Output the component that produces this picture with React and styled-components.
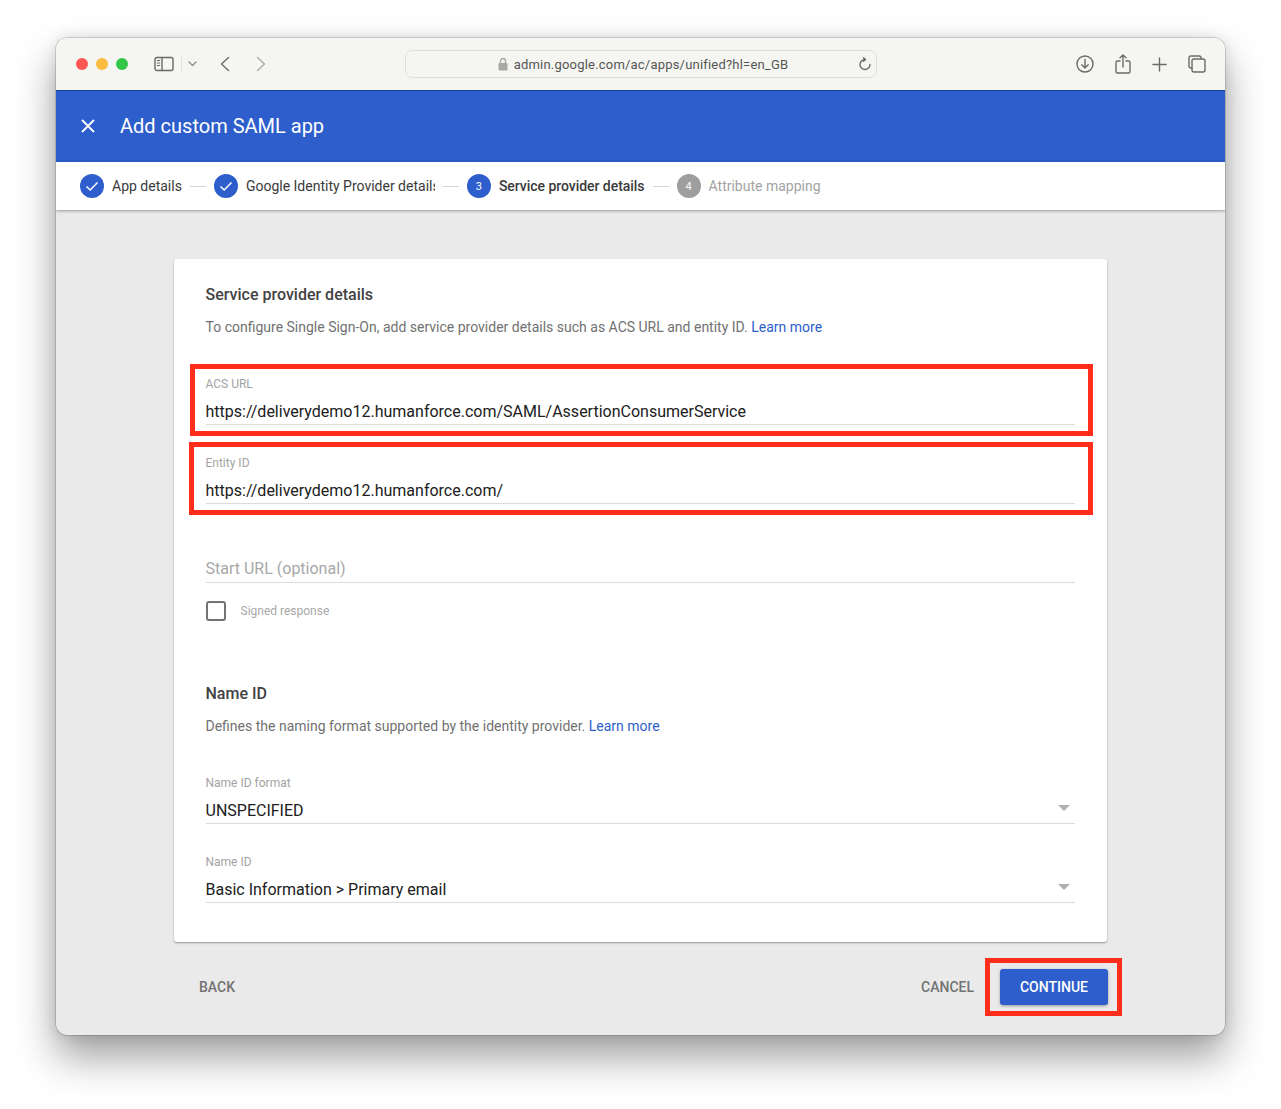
import React from 'react';
import styled, { createGlobalStyle } from 'styled-components';

const GlobalStyle = createGlobalStyle`
  html, body {
    margin: 0;
    padding: 0;
    background: #ffffff;
  }
  body {
    font-family: Roboto, "Liberation Sans", sans-serif;
    -webkit-font-smoothing: antialiased;
  }
`;

const Page = styled.div`
  width: 1281px;
  height: 1109px;
  box-sizing: border-box;
  padding: 38px 56px 0;
  overflow: hidden;
`;

const Window = styled.div`
  width: 1169px;
  height: 997px;
  border-radius: 11px;
  overflow: hidden;
  background: #eaeaea;
  display: flex;
  flex-direction: column;
  box-shadow: 0 0 0 0.5px rgba(0, 0, 0, 0.28), 0 22px 40px rgba(0, 0, 0, 0.38), 0 0 14px rgba(0, 0, 0, 0.12);
`;

const TitleBar = styled.div`
  height: 52px;
  flex: none;
  background: #f5f5f1;
  display: flex;
  align-items: center;
  padding: 0 19px 0 20px;
  position: relative;
  border-bottom: 1px solid #103c9c;
`;

const Lights = styled.div`
  display: flex;
  gap: 8px;
  margin-right: 26px;
`;

const Light = styled.span`
  width: 12px;
  height: 12px;
  border-radius: 50%;
  background: ${({ color }) => color};
`;

const ToolIcon = styled.svg`
  display: block;
  flex: none;
  fill: none;
  stroke: ${({ stroke }) => stroke || '#6b6b66'};
  stroke-width: 1.4;
  stroke-linecap: round;
  stroke-linejoin: round;
  margin-left: ${({ $left }) => $left || 0}px;
`;

const ToolDivider = styled.span`
  width: 1px;
  height: 18px;
  background: #e2e2de;
  margin: 0 6px 0 7px;
`;

const AddressBar = styled.div`
  width: 470px;
  height: 26px;
  box-sizing: content-box;
  margin-left: 139px;
  border: 1px solid #dededa;
  border-radius: 7px;
  display: flex;
  align-items: center;
  justify-content: center;
  gap: 6px;
  color: #555555;
  font-size: 13px;
  letter-spacing: 0.2px;
  position: relative;
`;

const AddressText = styled.span`
  display: flex;
  align-items: center;
  gap: 6px;
  margin-left: 4px;
`;

const Reload = styled.span`
  position: absolute;
  right: 4px;
  top: 6px;
`;

const RightTools = styled.div`
  margin-left: auto;
  display: flex;
  align-items: center;
  gap: 21px;
`;

const AppHeader = styled.header`
  height: 71px;
  flex: none;
  box-sizing: border-box;
  background: #2d5ecb;
  color: #ffffff;
  display: flex;
  align-items: center;
  padding: 0 24px 1px;
  gap: 24px;
  font-size: 20px;
`;

const Stepper = styled.nav`
  height: 48px;
  flex: none;
  background: #ffffff;
  display: flex;
  align-items: center;
  padding: 0 24px;
  box-shadow: 0 1px 3px rgba(0, 0, 0, 0.35);
  position: relative;
  font-size: 14px;
`;

const StepCircle = styled.span`
  width: 24px;
  height: 24px;
  border-radius: 50%;
  flex: none;
  background: ${({ $off }) => ($off ? '#9e9e9e' : '#2d5ecb')};
  color: #ffffff;
  font-size: 11px;
  display: flex;
  align-items: center;
  justify-content: center;
  margin-right: 8px;
`;

const StepLabel = styled.span`
  color: ${({ $off }) => ($off ? '#a3a3a3' : '#3a3a3a')};
  font-weight: ${({ $active }) => ($active ? 500 : 400)};
  letter-spacing: ${({ $active }) => ($active ? '-0.04px' : '0')};
  white-space: nowrap;
  overflow: hidden;
  ${({ $clip }) => ($clip ? `width: ${$clip}px;` : '')}
`;

const StepLine = styled.span`
  width: 16px;
  height: 1px;
  background: #d4d4d4;
  flex: none;
  margin: 0 8px 0 8px;
`;

const Content = styled.main`
  flex: 1;
  display: flex;
  flex-direction: column;
  align-items: center;
  padding-top: 49px;
  position: relative;
`;

const Card = styled.section`
  width: 933px;
  height: 683px;
  box-sizing: border-box;
  background: #ffffff;
  border-radius: 3px;
  box-shadow: 0 1px 2px rgba(0, 0, 0, 0.38);
  padding: 26px 32px 0 31.5px;
`;

const Heading = styled.h2`
  margin: ${({ $top }) => $top || 0}px 0 0;
  font-size: 16px;
  line-height: 20px;
  font-weight: 500;
  color: #424242;
`;

const Description = styled.p`
  margin: 12px 0 0;
  font-size: 14px;
  line-height: 20px;
  color: #717171;
`;

const LearnMore = styled.a`
  color: #2d5ecb;
`;

const Field = styled.div`
  margin-top: ${({ $top }) => $top}px;
  height: 50px;
  box-sizing: border-box;
  border-bottom: 1px solid #dcdcdc;
  position: relative;
`;

const FieldLabel = styled.div`
  font-size: 12px;
  line-height: 18px;
  color: #a3a3a3;
`;

const FieldValue = styled.div`
  margin-top: 9px;
  font-size: 16px;
  line-height: 19px;
  color: #202020;
`;

const Caret = styled.span`
  position: absolute;
  right: 5px;
  top: 31px;
  width: 0;
  height: 0;
  border-left: 6px solid transparent;
  border-right: 6px solid transparent;
  border-top: 6px solid #b0b0b0;
`;

const PlainField = styled.div`
  margin-top: 55px;
  height: 24px;
  box-sizing: border-box;
  border-bottom: 1px solid #dcdcdc;
  font-size: 16px;
  line-height: 19px;
  color: #a8a8a8;
`;

const CheckRow = styled.div`
  margin-top: 18px;
  display: flex;
  align-items: center;
  gap: 15px;
  height: 20px;
  font-size: 12px;
  color: #a8a8a8;
`;

const Checkbox = styled.span`
  width: 20px;
  height: 20px;
  box-sizing: border-box;
  border: 2px solid #737373;
  border-radius: 3px;
`;

const Footer = styled.footer`
  width: 935px;
  margin-top: 27px;
  height: 36px;
  display: flex;
  align-items: center;
  font-size: 14px;
  font-weight: 500;
  color: #737373;
`;

const TextButton = styled.button`
  border: none;
  background: none;
  padding: 0;
  font: inherit;
  color: inherit;
  margin-left: ${({ $left }) => $left || 0};
`;

const PrimaryButton = styled.button`
  width: 108px;
  height: 36px;
  margin-left: 26px;
  border: none;
  border-radius: 3px;
  background: #2d5ecb;
  color: #ffffff;
  font: inherit;
  box-shadow: 0 1px 3px rgba(0, 0, 0, 0.35);
`;

const Highlight = styled.div`
  position: absolute;
  box-sizing: border-box;
  border: 5px solid #ff2d1c;
  left: ${({ $x }) => $x}px;
  top: ${({ $y }) => $y}px;
  width: ${({ $w }) => $w}px;
  height: ${({ $h }) => $h}px;
`;

const CheckMark = () => (
  <svg width="16" height="16" viewBox="0 0 16 16" fill="none" stroke="#fff" strokeWidth="1.5">
    <path d="M2.5 8.5 6.2 12 13.5 4.5" />
  </svg>
);

const Step = ({ mark, label, active, off, clip }) => (
  <>
    <StepCircle $off={off}>{mark === 'check' ? <CheckMark /> : mark}</StepCircle>
    <StepLabel $active={active} $off={off} $clip={clip}>{label}</StepLabel>
  </>
);

export default function App() {
  return (
    <Page>
      <GlobalStyle />
      <Window>
        <TitleBar>
          <Lights>
            <Light color="#fc5753" />
            <Light color="#fdbc40" />
            <Light color="#33c748" />
          </Lights>
          <ToolIcon width="20" height="16" viewBox="0 0 20 16">
            <rect x="1" y="1.5" width="18" height="13" rx="2" />
            <path d="M8 1.5v13" />
            <path d="M3.3 4.5h2.4M3.3 7h2.4M3.3 9.5h2.4" strokeWidth="1" />
          </ToolIcon>
          <ToolDivider />
          <ToolIcon width="9" height="6" viewBox="0 0 9 6" stroke="#8f8f8b">
            <path d="M1 1l3.5 3.5L8 1" />
          </ToolIcon>
          <ToolIcon $left={23} width="10" height="16" viewBox="0 0 10 16">
            <path d="M8.5 1.5 1.5 8l7 6.5" />
          </ToolIcon>
          <ToolIcon $left={26} width="10" height="16" viewBox="0 0 10 16" stroke="#a9a9a6">
            <path d="M1.5 1.5 8.5 8l-7 6.5" />
          </ToolIcon>
          <AddressBar>
            <AddressText>
              <svg width="10" height="14" viewBox="0 0 10 14">
                <path d="M2.5 6V4a2.5 2.5 0 0 1 5 0v2" fill="none" stroke="#a8a8a8" strokeWidth="1.3" />
                <rect x="0.5" y="6" width="9" height="7.5" rx="1.2" fill="#a8a8a8" />
              </svg>
              admin.google.com/ac/apps/unified?hl=en_GB
            </AddressText>
            <Reload>
              <ToolIcon width="14" height="14" viewBox="0 0 14 14">
                <path d="M7 2.5a5 5 0 1 0 5 5" />
                <path d="M5.5 0.8 7.5 2.5 5.5 4.3" />
              </ToolIcon>
            </Reload>
          </AddressBar>
          <RightTools>
            <ToolIcon width="18" height="18" viewBox="0 0 18 18">
              <circle cx="9" cy="9" r="8" />
              <path d="M9 4.5V13M5.8 9.8 9 13l3.2-3.2" />
            </ToolIcon>
            <ToolIcon width="16" height="20" viewBox="0 0 16 20">
              <path d="M5 7H2.5A1.5 1.5 0 0 0 1 8.5v9A1.5 1.5 0 0 0 2.5 19h11a1.5 1.5 0 0 0 1.5-1.5v-9A1.5 1.5 0 0 0 13.5 7H11" />
              <path d="M8 13V1M5 3.8 8 1l3 2.8" />
            </ToolIcon>
            <ToolIcon width="15" height="15" viewBox="0 0 15 15">
              <path d="M7.5 1v13M1 7.5h13" />
            </ToolIcon>
            <ToolIcon width="18" height="18" viewBox="0 0 18 18">
              <path d="M4 13H2.8A1.8 1.8 0 0 1 1 11.2V2.8A1.8 1.8 0 0 1 2.8 1h8.4A1.8 1.8 0 0 1 13 2.8V4" />
              <rect x="4" y="4" width="13" height="13" rx="2" />
            </ToolIcon>
          </RightTools>
        </TitleBar>

        <AppHeader>
          <svg width="16" height="16" viewBox="0 0 16 16" stroke="#fff" strokeWidth="1.8">
            <path d="M2 2l12 12M14 2 2 14" />
          </svg>
          Add custom SAML app
        </AppHeader>

        <Stepper>
          <Step mark="check" label="App details" />
          <StepLine />
          <Step mark="check" label="Google Identity Provider details" clip={189} />
          <StepLine />
          <Step mark="3" label="Service provider details" active />
          <StepLine />
          <Step mark="4" label="Attribute mapping" off />
        </Stepper>

        <Content>
          <Card>
            <Heading>Service provider details</Heading>
            <Description>
              To configure Single Sign-On, add service provider details such as ACS URL and entity ID.{' '}
              <LearnMore>Learn more</LearnMore>
            </Description>
            <Field $top={38}>
              <FieldLabel>ACS URL</FieldLabel>
              <FieldValue>https://deliverydemo12.humanforce.com/SAML/AssertionConsumerService</FieldValue>
            </Field>
            <Field $top={29}>
              <FieldLabel>Entity ID</FieldLabel>
              <FieldValue>https://deliverydemo12.humanforce.com/</FieldValue>
            </Field>
            <PlainField>Start URL (optional)</PlainField>
            <CheckRow>
              <Checkbox />
              Signed response
            </CheckRow>
            <Heading $top={63}>Name ID</Heading>
            <Description>
              Defines the naming format supported by the identity provider. <LearnMore>Learn more</LearnMore>
            </Description>
            <Field $top={38}>
              <FieldLabel>Name ID format</FieldLabel>
              <FieldValue>UNSPECIFIED</FieldValue>
              <Caret />
            </Field>
            <Field $top={29}>
              <FieldLabel>Name ID</FieldLabel>
              <FieldValue>Basic Information &gt; Primary email</FieldValue>
              <Caret />
            </Field>
          </Card>
          <Footer>
            <TextButton $left="26px">BACK</TextButton>
            <TextButton $left="auto">CANCEL</TextButton>
            <PrimaryButton>CONTINUE</PrimaryButton>
          </Footer>
        </Content>
      </Window>
      <Highlight $x={190} $y={364} $w={903} $h={72} />
      <Highlight $x={189} $y={442} $w={904} $h={73} />
      <Highlight $x={985} $y={958} $w={137} $h={58} />
    </Page>
  );
}
